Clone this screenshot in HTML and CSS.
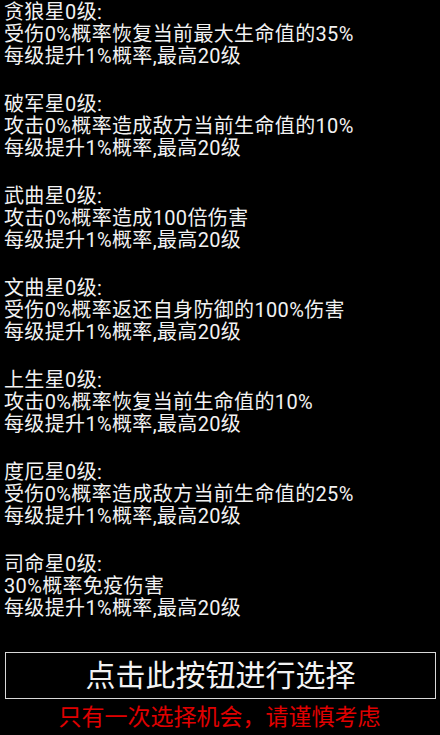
FILE: index.html
```html
<!DOCTYPE html>
<html lang="zh">
<head>
    <meta charset="UTF-8">
    <meta name="viewport" content="width=device-width, initial-scale=1.0">
    <title>星宿选择</title>
    <link rel="stylesheet" href="styles.css">
</head>
<body>

<div id="star-list">
    <div class="star">
        <div>贪狼星0级:</div>
        <div>受伤0%概率恢复当前最大生命值的35%</div>
        <div>每级提升1%概率,最高20级</div>
    </div>
    <div class="star">
        <div>破军星0级:</div>
        <div>攻击0%概率造成敌方当前生命值的10%</div>
        <div>每级提升1%概率,最高20级</div>
    </div>
    <div class="star">
        <div>武曲星0级:</div>
        <div>攻击0%概率造成100倍伤害</div>
        <div>每级提升1%概率,最高20级</div>
    </div>
    <div class="star">
        <div>文曲星0级:</div>
        <div>受伤0%概率返还自身防御的100%伤害</div>
        <div>每级提升1%概率,最高20级</div>
    </div>
    <div class="star">
        <div>上生星0级:</div>
        <div>攻击0%概率恢复当前生命值的10%</div>
        <div>每级提升1%概率,最高20级</div>
    </div>
    <div class="star">
        <div>度厄星0级:</div>
        <div>受伤0%概率造成敌方当前生命值的25%</div>
        <div>每级提升1%概率,最高20级</div>
    </div>
    <div class="star">
        <div>司命星0级:</div>
        <div>30%概率免疫伤害</div>
        <div>每级提升1%概率,最高20级</div>
    </div>
</div>

<button id="choose-button">点击此按钮进行选择</button>
<div id="warning">只有一次选择机会，请谨慎考虑</div>

</body>
</html>
```

FILE: styles.css
```css
body {
    background-color: #000;
    color: #f2f2f2;
    font-family: Roboto, "Noto Sans CJK SC", sans-serif;
    margin: 0;
    padding: 0 5px 0 4px;
}

#star-list {
    display: flex;
    flex-direction: column;
    gap: 26px; /* espacio entre estrellas */
    padding-top: 1px;
}

.star {
    font-size: 20px;
    line-height: 22px;
    letter-spacing: 0.35px;
}

#choose-button {
    display: block;
    width: 431px;
    height: 47px;
    margin: 33px 0 0 1px;
    background-color: #000;
    color: #f2f2f2;
    border: 1px solid #d8d8d8;
    font-family: inherit;
    font-size: 30px;
    line-height: 1;
    padding: 0;
}

#warning {
    color: #e00000;
    font-size: 23px;
    line-height: 28px;
    text-align: center;
    margin-top: 5px;
}
```
